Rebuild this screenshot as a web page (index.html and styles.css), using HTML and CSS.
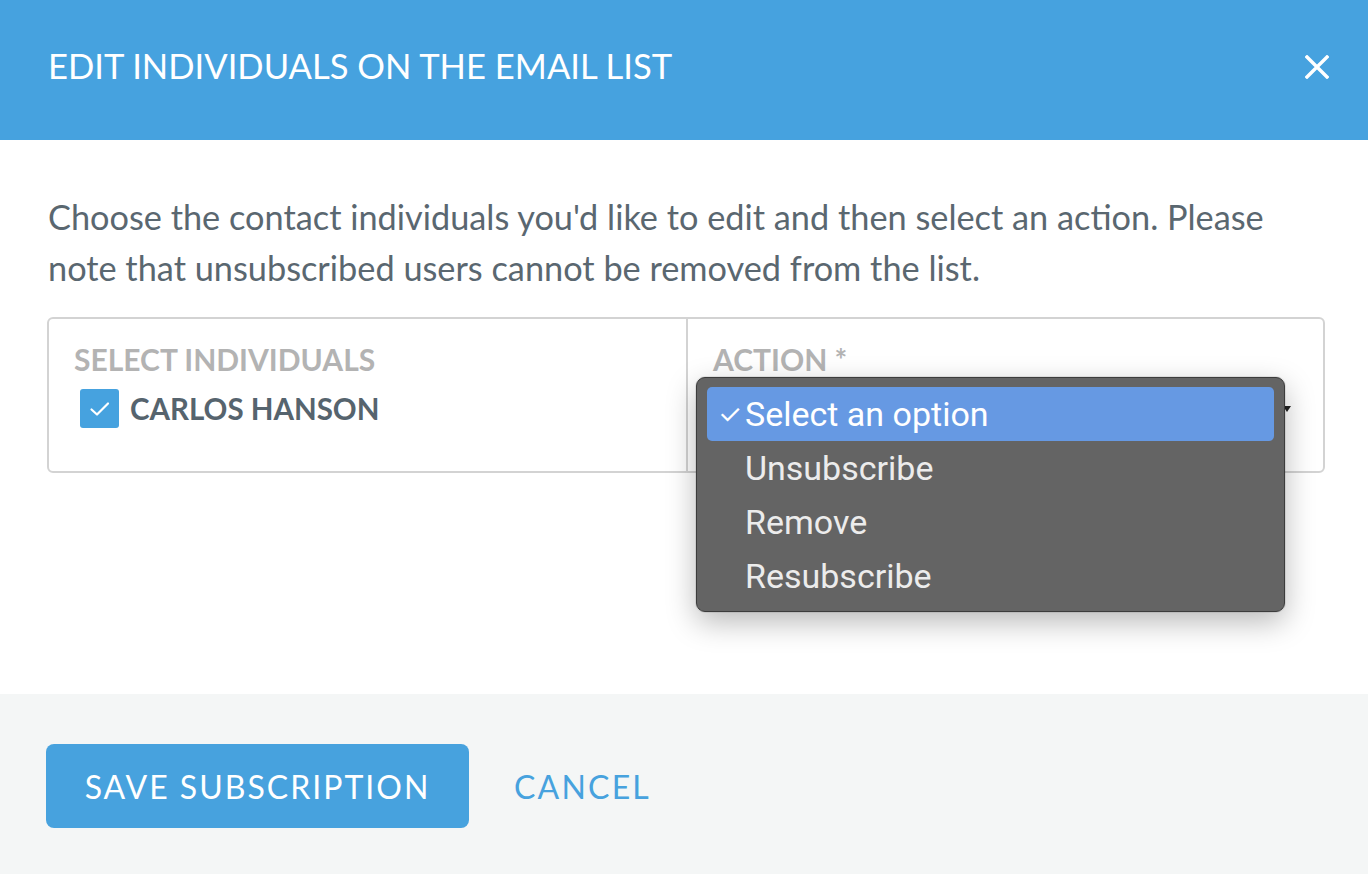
FILE: index.html
```html
<!DOCTYPE html>
<html lang="en">
<head>
<meta charset="utf-8">
<title>Edit individuals on the email list</title>
<link rel="stylesheet" href="styles.css">
</head>
<body>
<div class="modal">
  <header class="modal-header">
    <h1 class="modal-title">Edit individuals on the email list</h1>
    <button class="close" aria-label="Close">
      <svg width="24" height="24" viewBox="0 0 24 24"><path d="M2 2 L22 22 M22 2 L2 22" stroke="#fff" stroke-width="3.4" stroke-linecap="square" fill="none"/></svg>
    </button>
  </header>
  <main class="modal-body">
    <p class="intro">Choose the contact individuals you'd like to edit and then select an action. Please note that unsubscribed users cannot be removed from the list.</p>
    <div class="fields">
      <div class="field">
        <div class="label">Select individuals</div>
        <label class="check">
          <span class="box"><svg width="28" height="28" viewBox="0 0 28 28"><path d="M5.5 14.5 L11 19.5 L22 8.5" stroke="#fff" stroke-width="2.2" fill="none" stroke-linecap="round" stroke-linejoin="round"/></svg></span>
          <span class="name">Carlos Hanson</span>
        </label>
      </div>
      <div class="field action">
        <div class="label">Action *</div>
        <span class="arrow"></span>
        <ul class="menu">
          <li class="item selected"><span class="tick">✓</span>Select an option</li>
          <li class="item">Unsubscribe</li>
          <li class="item">Remove</li>
          <li class="item">Resubscribe</li>
        </ul>
      </div>
    </div>
  </main>
  <footer class="modal-footer">
    <button class="btn-primary">Save subscription</button>
    <button class="btn-link">Cancel</button>
  </footer>
</div>
</body>
</html>
```
FILE: styles.css
```css
* { box-sizing: border-box; }
html, body { margin: 0; padding: 0; }
body {
  font-family: "Lato", "Liberation Sans", sans-serif;
  background: #ffffff;
  width: 1368px;
  height: 874px;
  overflow: hidden;
}
.modal {
  display: flex;
  flex-direction: column;
  height: 874px;
}
.modal-header {
  height: 140px;
  background: #46a2df;
  display: flex;
  align-items: center;
  justify-content: space-between;
  padding: 0 39px 10px 48px;
}
.modal-title {
  margin: 0;
  color: #fff;
  font-weight: 400;
  font-size: 34.6px;
  text-transform: uppercase;
  letter-spacing: 0;
}
.close {
  background: none;
  border: 0;
  padding: 0;
  width: 24px;
  height: 24px;
  display: flex;
  margin-top: 4px;
}
.modal-body {
  height: 554px;
  padding: 51px 43px 0 47px;
  position: relative;
}
.intro {
  margin: 0 0 0 1px;
  font-size: 34.3px;
  line-height: 51px;
  color: #5a6770;
}
.fields {
  margin-top: 24px;
  border: 2px solid #d3d3d3;
  border-radius: 6px;
  height: 156px;
  display: grid;
  grid-template-columns: 637px 1fr;
}
.field {
  padding: 22px 25px;
}
.field.action {
  border-left: 2px solid #d3d3d3;
  position: relative;
}
.label {
  font-weight: 700;
  font-size: 30px;
  color: #b3b3b3;
  text-transform: uppercase;
  letter-spacing: 0;
  line-height: 36px;
}
.check {
  display: flex;
  align-items: center;
  margin-top: 12px;
  margin-left: 6px;
}
.box {
  width: 39px;
  height: 39px;
  border-radius: 3px;
  background: #46a2df;
  display: flex;
  align-items: center;
  justify-content: center;
}
.name {
  margin-left: 11px;
  font-weight: 700;
  font-size: 29.5px;
  color: #56646e;
  text-transform: uppercase;
  letter-spacing: 0;
}
.arrow {
  position: absolute;
  right: 32px;
  top: 87px;
  border-left: 4px solid transparent;
  border-right: 4px solid transparent;
  border-top: 6px solid #222;
}
.menu {
  position: absolute;
  left: 8px;
  top: 58px;
  width: 589px;
  height: 235px;
  margin: 0;
  padding: 9px 10px;
  list-style: none;
  background: #646464;
  border: 1px solid #3c3c3c;
  border-radius: 9px;
  box-shadow: 0 10px 30px rgba(0,0,0,0.28), 0 0 0 1px rgba(0,0,0,0.08);
}
.item {
  height: 54px;
  display: flex;
  align-items: center;
  padding-left: 38px;
  font-family: "Roboto", "Inter", sans-serif;
  font-size: 34px;
  color: #ececec;
  position: relative;
}
.item.selected {
  background: #6699e3;
  border-radius: 5px;
  color: #fff;
}
.tick {
  position: absolute;
  left: 11px;
  font-size: 27px;
}
.modal-footer {
  height: 180px;
  background: #f4f6f6;
  display: flex;
  align-items: center;
  padding: 4px 46px 0;
}
.btn-primary {
  height: 84px;
  width: 423px;
  border: 0;
  border-radius: 8px;
  background: #47a2de;
  color: #fff;
  font-family: "Lato", sans-serif;
  font-size: 32px;
  letter-spacing: 2px;
  text-transform: uppercase;
}
.btn-link {
  margin-left: 45px;
  background: none;
  border: 0;
  padding: 0;
  color: #47a2de;
  font-family: "Lato", sans-serif;
  font-size: 32px;
  letter-spacing: 2.2px;
  text-transform: uppercase;
}
```
